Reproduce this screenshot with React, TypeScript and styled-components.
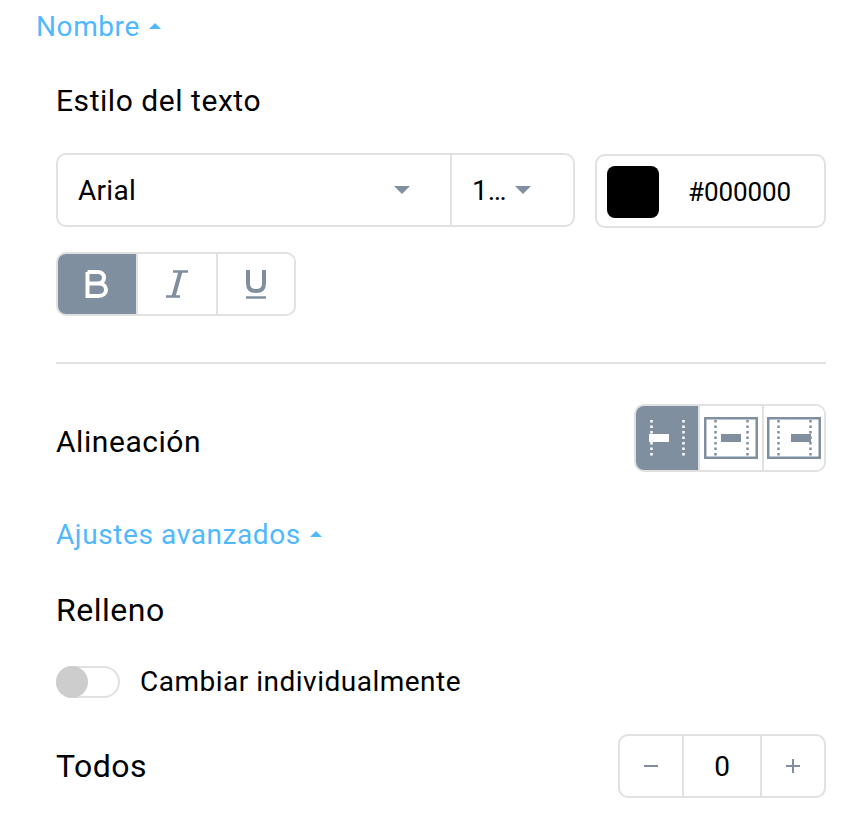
import React from "react";
import styled, { createGlobalStyle } from "styled-components";

const GlobalStyle = createGlobalStyle`
  html, body {
    margin: 0;
    padding: 0;
    background: #fff;
  }
  body {
    font-family: Roboto, "Liberation Sans", sans-serif;
    color: #000;
  }
`;

const BORDER = "#e1e1e1";
const SLATE = "#7f8fa0";
const BLUE = "#4fb8ff";

function App() {
  return (
    <Page>
      <GlobalStyle />
      <Toggle $outdent>
        Nombre <Caret />
      </Toggle>
      <Label $top={39}>Estilo del texto</Label>

      <FontRow>
        <SelectGroup>
          <FontSelect>
            Arial
            <DownArrow />
          </FontSelect>
          <SizeSelect>
            1…
            <DownArrow />
          </SizeSelect>
        </SelectGroup>
        <ColorField>
          <Swatch />
          <ColorValue>#000000</ColorValue>
        </ColorField>
      </FontRow>

      <StyleGroup>
        <StyleButton $active>
          <svg width="24" height="28" viewBox="0 0 24 28">
            <path
              d="M2.500 2h10c4 0 6.500 2.200 6.500 5.800 0 3.400-2.500 5.700-6.500 5.700h-10m0 0h11c4.500 0 7.500 2.400 7.500 6.200 0 3.900-3 6.300-7.500 6.300h-11V2z"
              stroke="#fff"
              strokeWidth="4"
              fill="none"
            />
          </svg>
        </StyleButton>
        <StyleButton>
          <svg width="22" height="28" viewBox="0 0 22 28">
            <path d="M7 1.500h15M0 26.500h14" stroke={SLATE} strokeWidth="2.600" fill="none" />
            <path d="M14.500 1.500 7.500 26.500" stroke={SLATE} strokeWidth="4" fill="none" />
          </svg>
        </StyleButton>
        <StyleButton>
          <svg width="22" height="30" viewBox="0 0 22 30">
            <path
              d="M3 1v13.500c0 5 3 7.500 8 7.500s8-2.500 8-7.500V1"
              stroke={SLATE}
              strokeWidth="4"
              fill="none"
            />
            <path d="M1 28.500h20" stroke={SLATE} strokeWidth="2.400" />
          </svg>
        </StyleButton>
      </StyleGroup>

      <Divider />

      <AlignRow>
        <AlignLabel>Alineación</AlignLabel>
        <AlignGroup>
          <AlignButton $active>
            <AlignIcon position="left" color="#fff" />
          </AlignButton>
          <AlignButton>
            <AlignIcon position="center" color={SLATE} framed />
          </AlignButton>
          <AlignButton>
            <AlignIcon position="right" color={SLATE} framed />
          </AlignButton>
        </AlignGroup>
      </AlignRow>

      <Toggle>
        Ajustes avanzados <Caret />
      </Toggle>
      <SectionLabel $top={40}>Relleno</SectionLabel>

      <SwitchRow>
        <Switch>
          <SwitchKnob />
        </Switch>
        <SwitchLabel>Cambiar individualmente</SwitchLabel>
      </SwitchRow>

      <AllRow>
        <RowLabel>Todos</RowLabel>
        <Stepper>
          <StepButton>
            <svg width="16" height="16" viewBox="0 0 16 16">
              <path d="M1 8h14" stroke={SLATE} strokeWidth="2" />
            </svg>
          </StepButton>
          <StepValue>0</StepValue>
          <StepButton>
            <svg width="16" height="16" viewBox="0 0 16 16">
              <path d="M1 8h14M8 1v14" stroke={SLATE} strokeWidth="2" />
            </svg>
          </StepButton>
        </Stepper>
      </AllRow>
    </Page>
  );
}

function AlignIcon({
  position,
  color,
  framed,
}: {
  position: "left" | "center" | "right";
  color: string;
  framed?: boolean;
}) {
  const barX = { left: 9, center: 17, right: 24 }[position];
  return (
    <svg width="54" height="42" viewBox="0 0 54 42">
      {framed && (
        <rect x="1.250" y="1.250" width="51.500" height="39.500" fill="none" stroke={color} strokeWidth="2.500" />
      )}
      <path
        d="M11.500 3v36M43.500 3v36"
        stroke={color}
        strokeWidth="2.500"
        strokeDasharray="2.500 3"
        fill="none"
      />
      <rect x={barX} y="17" width="20" height="8" fill={color} />
    </svg>
  );
}

const Page = styled.div`
  width: 770px;
  height: 818px;
  margin-left: 56px;
  box-sizing: border-box;
  padding-top: 8px;
`;

const Toggle = styled.div<{ $outdent?: boolean }>`
  display: flex;
  align-items: center;
  gap: 9.500px;
  height: 36px;
  margin-left: ${(p) => (p.$outdent ? "-20px" : "0")};
  font-size: 28px;
  letter-spacing: 0.6px;
  color: ${BLUE};
`;

const Caret = styled.span`
  width: 0;
  height: 0;
  border-left: 6.500px solid transparent;
  border-right: 6.500px solid transparent;
  border-bottom: 6.500px solid ${BLUE};
`;

const Label = styled.div<{ $top: number }>`
  margin-top: ${(p) => p.$top}px;
  height: 36px;
  line-height: 36px;
  font-size: 30px;
  letter-spacing: 0.55px;
`;

const SectionLabel = styled(Label)`
  font-size: 32px;
  letter-spacing: 0.5px;
`;

const RowLabel = styled.div`
  font-size: 32px;
  letter-spacing: 0.5px;
`;

const AlignLabel = styled.div`
  padding-top: 6px;
  font-size: 30px;
  letter-spacing: 0.55px;
`;

const FontRow = styled.div`
  display: flex;
  gap: 20px;
  margin-top: 34px;
  align-items: flex-start;
`;

const SelectGroup = styled.div`
  display: flex;
  width: 519px;
  height: 74px;
  box-sizing: border-box;
  border: 2px solid ${BORDER};
  border-radius: 10px;
`;

const FontSelect = styled.div`
  flex: 1;
  display: flex;
  align-items: center;
  justify-content: space-between;
  padding: 0 40px 0 20px;
  font-size: 28px;
  letter-spacing: 0.3px;
  border-right: 2px solid ${BORDER};
`;

const SizeSelect = styled.div`
  width: 121px;
  box-sizing: border-box;
  display: flex;
  align-items: center;
  gap: 9px;
  padding-left: 20px;
  font-size: 28px;
`;

const DownArrow = styled.span`
  width: 0;
  height: 0;
  border-left: 8px solid transparent;
  border-right: 8px solid transparent;
  border-top: 8px solid ${SLATE};
`;

const ColorField = styled.div`
  display: flex;
  align-items: center;
  width: 231px;
  height: 74px;
  margin-top: 1px;
  box-sizing: border-box;
  border: 2px solid ${BORDER};
  border-radius: 10px;
  padding: 2px 0 0 10px;
`;

const Swatch = styled.div`
  width: 52px;
  height: 52px;
  border-radius: 8px;
  background: #000;
`;

const ColorValue = styled.div`
  margin-left: 29px;
  font-size: 26px;
  letter-spacing: -0.1px;
`;

const StyleGroup = styled.div`
  display: grid;
  grid-template-columns: 78px 80px 1fr;
  width: 240px;
  height: 64px;
  margin-top: 24px;
  box-sizing: border-box;
  border: 2px solid ${BORDER};
  border-radius: 10px;
  overflow: hidden;
`;

const StyleButton = styled.div<{ $active?: boolean }>`
  display: flex;
  align-items: center;
  justify-content: center;
  background: ${(p) => (p.$active ? SLATE : "#fff")};
  & + & {
    border-left: 2px solid ${BORDER};
  }
`;

const Divider = styled.div`
  height: 2px;
  margin-top: 46px;
  background: ${BORDER};
`;

const AlignRow = styled.div`
  display: flex;
  align-items: center;
  justify-content: space-between;
  margin-top: 40px;
  margin-bottom: 44px;
`;

const AlignGroup = styled.div`
  display: grid;
  grid-template-columns: 62px 64px 1fr;
  width: 192px;
  height: 68px;
  box-sizing: border-box;
  border: 2px solid ${BORDER};
  border-radius: 10px;
  overflow: hidden;
`;

const AlignButton = styled.div<{ $active?: boolean }>`
  display: flex;
  align-items: center;
  justify-content: center;
  background: ${(p) => (p.$active ? SLATE : "#fff")};
  & + & {
    border-left: 2px solid ${BORDER};
  }
`;

const SwitchRow = styled.div`
  display: flex;
  align-items: center;
  gap: 20px;
  margin-top: 37px;
`;

const Switch = styled.div`
  width: 64px;
  height: 32px;
  box-sizing: border-box;
  border: 2px solid ${BORDER};
  border-radius: 16px;
  position: relative;
`;

const SwitchKnob = styled.div`
  position: absolute;
  left: -2px;
  top: -2px;
  width: 32px;
  height: 32px;
  border-radius: 50%;
  background: #cdcdcd;
`;

const SwitchLabel = styled.div`
  font-size: 28px;
  letter-spacing: 0.5px;
`;

const AllRow = styled.div`
  display: flex;
  align-items: center;
  justify-content: space-between;
  margin-top: 36px;
`;

const Stepper = styled.div`
  display: flex;
  width: 208px;
  height: 64px;
  box-sizing: border-box;
  border: 2px solid ${BORDER};
  border-radius: 10px;
`;

const StepButton = styled.div`
  flex: 1;
  display: flex;
  align-items: center;
  justify-content: center;
`;

const StepValue = styled.div`
  width: 80px;
  box-sizing: border-box;
  display: flex;
  align-items: center;
  justify-content: center;
  font-size: 28px;
  border-left: 2px solid ${BORDER};
  border-right: 2px solid ${BORDER};
`;

export default App;
